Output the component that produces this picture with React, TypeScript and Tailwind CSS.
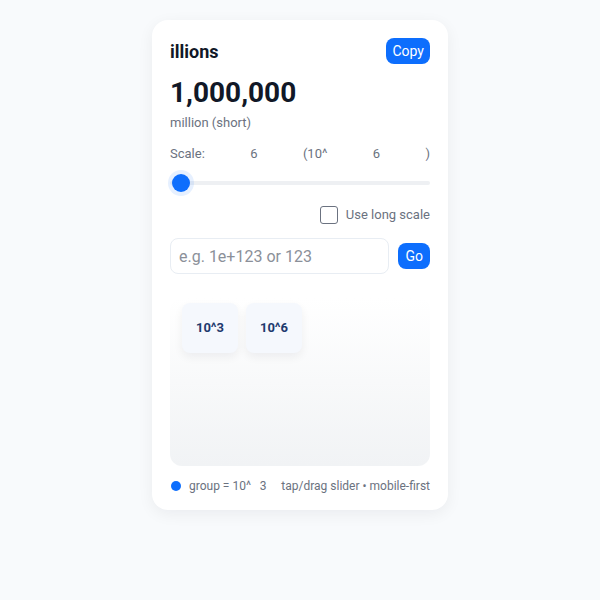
import { useState } from 'react';

const TILES = ['10^3', '10^6'];

export default function App() {
  const [scale, setScale] = useState(6);
  const [longScale, setLongScale] = useState(false);

  return (
    <div className="min-h-screen bg-[#f8fafc] flex justify-center pt-5" style={{ fontFamily: 'Roboto, "Noto Sans", sans-serif' }}>
      <div className="w-[296px] h-[490px] bg-white rounded-2xl shadow-[0_4px_16px_rgba(15,23,42,0.06)] px-[18px] pt-[18px] flex flex-col">
        <div className="flex items-center justify-between h-[26px]">
          <h1 className="text-[18px] font-bold text-[#111827]">illions</h1>
          <button className="h-[26px] px-1.5 rounded-lg bg-[#0d6efd] text-white text-[14px]">Copy</button>
        </div>

        <div className="mt-[12px] text-[28px] leading-[34px] font-bold text-[#111827]">1,000,000</div>
        <div className="mt-[4px] text-[13px] leading-[18px] text-[#6b7280]">million (short)</div>

        <div className="mt-[13px] flex justify-between text-[13px] leading-[18px] text-[#6b7280]">
          <span>Scale:</span>
          <span>{scale}</span>
          <span>(10^</span>
          <span>{scale}</span>
          <span>)</span>
        </div>

        <div className="mt-[11px] relative h-[18px] flex items-center">
          <div className="w-full h-[4px] rounded-full bg-[#eef0f3]" />
          <div className="absolute left-[2px] w-[18px] h-[18px] rounded-full bg-[#0d6efd] ring-4 ring-[#0d6efd]/10" />
        </div>

        <label className="mt-[14px] h-[18px] flex items-center justify-end gap-2 text-[13px] text-[#6b7280]">
          <input
            type="checkbox"
            checked={longScale}
            onChange={(e) => setLongScale(e.target.checked)}
            className="appearance-none w-[18px] h-[18px] rounded-[3px] border border-[#6b7280] bg-white"
          />
          <span>Use long scale</span>
        </label>

        <div className="mt-[14px] flex items-center gap-[9px]">
          <input
            placeholder="e.g. 1e+123 or 123"
            className="flex-1 min-w-0 h-[36px] rounded-lg border border-[#e8edf3] px-2 text-[16px] text-[#111827] placeholder:text-[#8b9099] outline-none"
            onChange={(e) => {
              const n = parseInt(e.target.value, 10);
              if (!isNaN(n)) setScale(n);
            }}
          />
          <button className="h-[26px] px-[7px] rounded-lg bg-[#0d6efd] text-white text-[14px]">Go</button>
        </div>

        <div className="mt-[24px] h-[168px] rounded-xl bg-gradient-to-b from-white to-[#f1f3f5] px-3 pt-[5px] flex gap-2 items-start">
          {TILES.map((t) => (
            <div
              key={t}
              className="w-[56px] h-[50px] rounded-lg bg-[#f5f8fd] shadow-[0_4px_10px_rgba(15,23,42,0.06)] flex items-center justify-center text-[13px] font-bold text-[#1e3a6e]"
            >
              {t}
            </div>
          ))}
        </div>

        <div className="mt-[12px] flex items-center justify-between text-[12px] leading-[16px] text-[#6b7280]">
          <div className="flex items-center gap-2">
            <span className="w-[10px] h-[10px] rounded-full bg-[#0d6efd] ml-[1px]" />
            <span>group = 10^&nbsp;&nbsp;&nbsp;3</span>
          </div>
          <span>tap/drag slider • mobile-first</span>
        </div>
      </div>
    </div>
  );
}
